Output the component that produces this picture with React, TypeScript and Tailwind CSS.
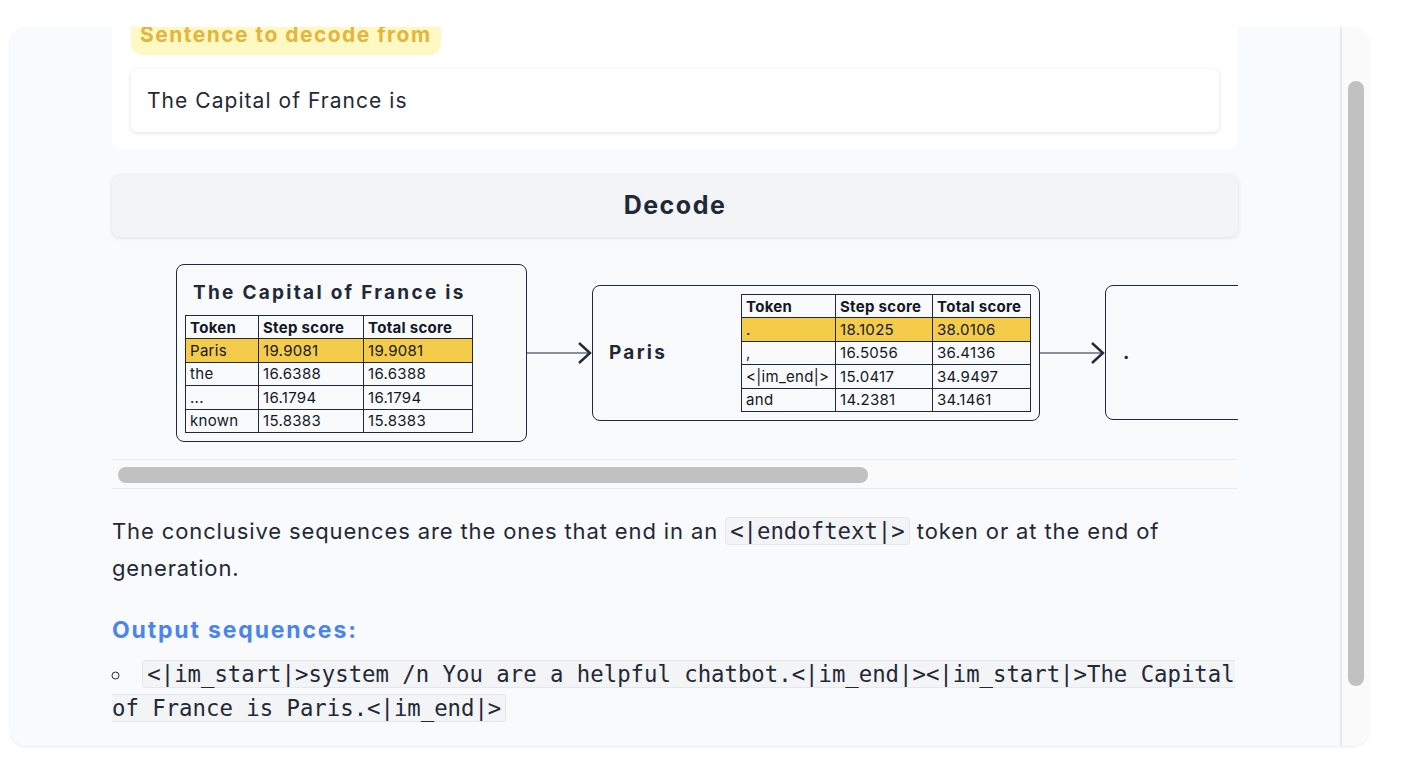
import React from 'react';

type Row = { token: string; step: string; total: string; hi?: boolean };

const firstRows: Row[] = [
  { token: 'Paris', step: '19.9081', total: '19.9081', hi: true },
  { token: 'the', step: '16.6388', total: '16.6388' },
  { token: '...', step: '16.1794', total: '16.1794' },
  { token: 'known', step: '15.8383', total: '15.8383' },
];

const parisRows: Row[] = [
  { token: '.', step: '18.1025', total: '38.0106', hi: true },
  { token: ',', step: '16.5056', total: '36.4136' },
  { token: '<|im_end|>', step: '15.0417', total: '34.9497' },
  { token: 'and', step: '14.2381', total: '34.1461' },
];

function ScoreTable({ rows, widths }: { rows: Row[]; widths: string[] }) {
  return (
    <table className="border-collapse text-[15px] leading-none tracking-[0.02em] text-[#111827]">
      <thead>
        <tr>
          {['Token', 'Step score', 'Total score'].map((h, i) => (
            <th key={h} className={`${widths[i]} h-[23.4px] border border-[#1f2937] px-[4px] text-left font-bold whitespace-nowrap`}>
              {h}
            </th>
          ))}
        </tr>
      </thead>
      <tbody>
        {rows.map((r) => (
          <tr key={r.token} className={r.hi ? 'bg-[#f4cc49]' : ''}>
            <td className="h-[23.4px] border border-[#1f2937] px-[4px] whitespace-nowrap">{r.token}</td>
            <td className="h-[23.4px] border border-[#1f2937] px-[4px]">{r.step}</td>
            <td className="h-[23.4px] border border-[#1f2937] px-[4px]">{r.total}</td>
          </tr>
        ))}
      </tbody>
    </table>
  );
}

function Arrow() {
  return (
    <svg width="65" height="24" viewBox="0 0 65 24" className="shrink-0">
      <line x1="0" y1="12" x2="63" y2="12" stroke="#1f2937" strokeWidth="1.2" />
      <polyline points="52,2 63,12 52,22" fill="none" stroke="#1f2937" strokeWidth="2.4" />
    </svg>
  );
}

export default function App() {
  return (
    <div className="min-h-screen bg-white pt-[27px] pl-[10px] font-['Inter',sans-serif] text-[#1f2937]">
      <div className="flex h-[719px] w-[1359px] overflow-hidden rounded-2xl bg-[#f9fafb] shadow-[0_1px_3px_rgba(0,0,0,0.08)]">
        {/* main scroll area */}
        <div className="flex-1 overflow-hidden">
          <div className="mx-auto -mt-[31px] w-[1126px]">
            {/* input card */}
            <div className="rounded-lg bg-white px-[19px] pt-[19px] pb-[17px]">
              <div className="inline-flex h-[40px] items-center rounded-xl bg-[#fef9c3] px-[9px] text-[21px] font-bold tracking-[0.07em] text-[#e6b43c]">
                Sentence to decode from
              </div>
              <div className="mt-[14px] flex h-[63px] items-center rounded-md bg-white px-[16px] text-[21px] tracking-[0.05em] shadow-[0_1px_4px_rgba(0,0,0,0.12)]">
                The Capital of France is
              </div>
            </div>

            {/* decode button */}
            <div className="mt-[26px] flex h-[62px] items-center justify-center rounded-lg bg-[#f3f4f6] text-[25px] font-bold tracking-[0.06em] text-[#1f2937] shadow-[0_1px_4px_rgba(0,0,0,0.12)]">
              Decode
            </div>

            {/* graph */}
            <div className="mt-[13px] overflow-hidden">
              <div className="flex items-center pl-16 pt-[14px] pb-[17px]">
                <div className="flex w-[351px] shrink-0 flex-col items-start rounded-lg border border-[#1f2937] px-[8px] pt-[16px] pb-[8px]">
                  <div className="mb-[10px] pl-[8px] text-[19px] leading-[24px] font-bold tracking-[0.12em]">
                    The Capital of France is
                  </div>
                  <ScoreTable rows={firstRows} widths={['w-[73px]', 'w-[105px]', 'w-[109px]']} />
                </div>
                <Arrow />
                <div className="flex shrink-0 items-center rounded-lg border border-[#1f2937] py-[8px] pr-[8px]">
                  <div className="w-[148px] pl-[16px] text-[19px] font-bold tracking-[0.12em]">Paris</div>
                  <ScoreTable rows={parisRows} widths={['w-[94px]', 'w-[97px]', 'w-[98px]']} />
                </div>
                <Arrow />
                <div className="flex h-[135px] w-[300px] shrink-0 items-center rounded-l-lg border border-[#1f2937] pl-[17px] text-[19px] font-bold">
                  .
                </div>
              </div>
              <div className="h-[30px] border-y border-[#ebebeb] bg-[#fafafa] px-[6px] pt-[7px]">
                <div className="h-[16px] w-[750px] rounded-full bg-[#c1c1c1]" />
              </div>
            </div>

            {/* explanation */}
            <p className="mt-[24px] text-[22px] leading-[37px] tracking-[0.04em]">
              The conclusive sequences are the ones that end in an{' '}
              <code className="rounded border border-[#e5e7eb] bg-[#f3f4f6] px-[4px] font-['DejaVu_Sans_Mono',monospace] text-[22.3px] tracking-normal">
                {'<|endoftext|>'}
              </code>{' '}
              token or at the end of generation.
            </p>

            <h3 className="mt-[28px] text-[23px] leading-[30px] font-bold tracking-[0.08em] text-[#4a85ef]">Output sequences:</h3>

            <ul className="mt-[12px] list-inside list-[circle] text-[22.3px] leading-[33.5px]">
              <li>
                <code className="rounded border border-[#e5e7eb] bg-[#f3f4f6] px-[4px] font-['DejaVu_Sans_Mono',monospace]">
                  {'<|im_start|>system /n You are a helpful chatbot.<|im_end|><|im_start|>The Capital'}
                  <br />
                  {'of France is Paris.<|im_end|>'}
                </code>
              </li>
            </ul>
          </div>
        </div>

        {/* vertical scrollbar */}
        <div className="w-[29px] shrink-0 border-l-2 border-[#e8e8e8] bg-[#fafafa] pt-[54px] pl-[6px]">
          <div className="h-[605px] w-[16px] rounded-full bg-[#c1c1c1]" />
        </div>
      </div>
    </div>
  );
}
